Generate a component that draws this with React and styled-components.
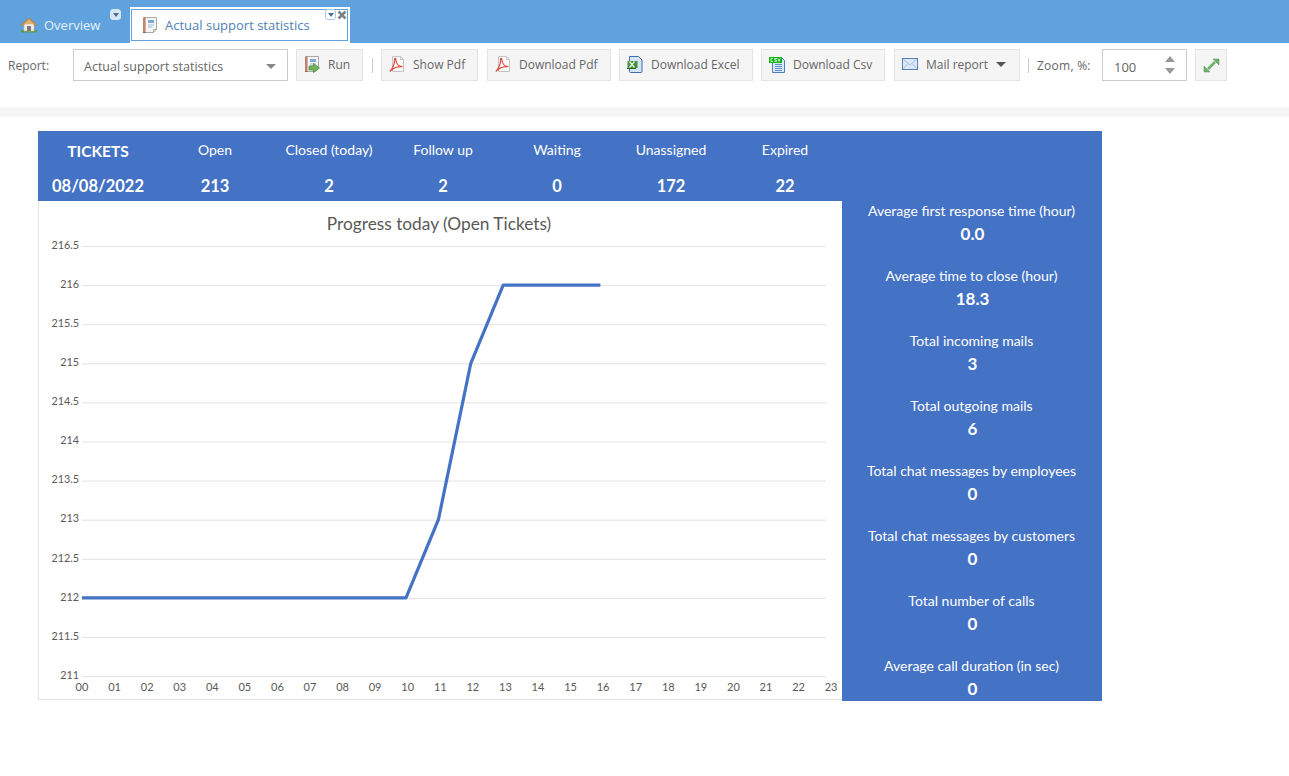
import React from "react";
import styled, { createGlobalStyle } from "styled-components";

const Global = createGlobalStyle`
  html, body { margin: 0; padding: 0; background: #fff; }
  body { font-family: "Open Sans", "Liberation Sans", sans-serif; overflow: hidden; }
  * { box-sizing: border-box; }
`;

const Page = styled.div`
  width: 1289px;
  height: 776px;
  display: flex;
  flex-direction: column;
`;

const TabBar = styled.div`
  height: 43px;
  background: #5fa2dd;
  display: flex;
  align-items: flex-end;
  padding-left: 9px;
`;

const Tab = styled.div`
  position: relative;
  width: 112px;
  height: 36px;
  margin-right: 9px;
  padding: 0 0 1px 11px;
  display: flex;
  align-items: center;
  gap: 6px;
  font-size: 13px;
  color: #e6f1fb;
`;

const ActiveTab = styled.div`
  position: relative;
  width: 220px;
  height: 36px;
  background: #fff;
  padding: 2px 2px 2px 1px;
`;

const ActiveInner = styled.div`
  height: 32px;
  border: 1px solid #5fa2dd;
  display: flex;
  align-items: center;
  gap: 7px;
  padding-left: 10px;
  font-size: 13px;
  color: #4f81b5;
`;

const TabMenu = styled.span`
  position: absolute;
  top: ${(p) => p.$top}px;
  right: ${(p) => p.$right}px;
  width: 11px;
  height: 11px;
  border-radius: 3px;
  background: ${(p) => (p.$light ? "#fff" : "#d5e6f6")};
  border: 1px solid ${(p) => (p.$light ? "#a9c9ea" : "#d5e6f6")};
  display: flex;
  align-items: center;
  justify-content: center;
  &::after {
    content: "";
    border-left: 3px solid transparent;
    border-right: 3px solid transparent;
    border-top: 4px solid #4c6f96;
  }
`;

const TabClose = styled.svg`
  position: absolute;
  top: 3px;
  right: 3px;
  width: 10px;
  height: 10px;
`;

const Toolbar = styled.div`
  height: 64px;
  padding: 6px 0 0 8px;
  display: flex;
  align-items: flex-start;
`;

const Label = styled.span`
  height: 32px;
  display: flex;
  align-items: center;
  font-size: 12px;
  letter-spacing: ${(p) => p.$ls || 0}px;
  color: #666;
  width: ${(p) => p.$w}px;
  flex: none;
`;

const SelectBox = styled.div`
  width: 215px;
  height: 32px;
  border: 1px solid #ccc;
  background: #fff;
  display: flex;
  align-items: center;
  justify-content: space-between;
  padding: 3px 11px 0 10px;
  font-size: 12.5px;
  color: #666;
  margin-right: 8px;
`;

const Caret = styled.span`
  width: 0;
  height: 0;
  border-left: 5.5px solid transparent;
  border-right: 5.5px solid transparent;
  border-top: 5px solid ${(p) => p.$color || "#888"};
  flex: none;
`;

const Button = styled.div`
  height: 32px;
  flex: none;
  width: ${(p) => p.$w}px;
  margin-right: ${(p) => p.$mr ?? 8}px;
  border: 1px solid #e3e3e3;
  background: #f5f5f5;
  display: flex;
  align-items: center;
  gap: 8px;
  padding: 0 0 2px 7px;
  font-size: 12px;
  color: #666;
  white-space: nowrap;
`;

const IconButton = styled(Button)`
  padding: 0 0 0 7px;
`;

const Separator = styled.span`
  width: 1px;
  height: 15px;
  margin: 9px 8px 0 ${(p) => p.$left ?? 1}px;
  background: #ccc;
  flex: none;
`;

const ZoomBox = styled.div`
  width: 85px;
  height: 32px;
  margin-right: 8px;
  flex: none;
  border: 1px solid #ccc;
  display: flex;
  align-items: center;
  justify-content: space-between;
  padding: 0 11px 0 11px;
  font-size: 13px;
  color: #666;
`;

const ZoomValue = styled.span`
  padding-top: 3px;
`;

const Spinner = styled.span`
  display: flex;
  flex-direction: column;
  gap: 6px;
`;

const SpinUp = styled.span`
  border-left: 5.5px solid transparent;
  border-right: 5.5px solid transparent;
  border-bottom: 6px solid #999;
`;

const SpinDown = styled.span`
  border-left: 5.5px solid transparent;
  border-right: 5.5px solid transparent;
  border-top: 6px solid #999;
`;

const Band = styled.div`
  height: 10px;
  background: #f5f5f5;
`;

const Report = styled.div`
  margin: 14px 0 0 38px;
  width: 1064px;
  height: 570px;
  display: grid;
  grid-template-columns: 804px 260px;
  grid-template-rows: 70px 500px;
  background: #4472c4;
  font-family: Lato, "Open Sans", sans-serif;
  color: #fff;
`;

const Header = styled.div`
  grid-column: 1 / 3;
  display: grid;
  grid-template-columns: 120px repeat(6, 114px);
  grid-template-rows: 40px 30px;
  text-align: center;
`;

const HeadLabel = styled.div`
  font-size: 14px;
  padding-top: 10px;
`;

const HeadTitle = styled.div`
  font-size: 15.5px;
  font-weight: 700;
  padding-top: 11px;
`;

const HeadValue = styled.div`
  font-size: 16.5px;
  font-weight: 700;
  padding-top: 5px;
`;

const ChartPanel = styled.div`
  background: #fff;
  height: 500px;
`;

const ChartFrame = styled.div`
  height: 499px;
  border-left: 1px solid #e4e4e4;
  border-bottom: 1px solid #e4e4e4;
`;

const ChartSvg = styled.svg`
  display: block;
  font-family: Lato, "Open Sans", sans-serif;
`;

const Side = styled.div`
  display: flex;
  flex-direction: column;
  text-align: center;
  overflow: hidden;
`;

const Stat = styled.div`
  height: 65px;
  padding: 0 1px 0 0;
  flex: none;
`;

const StatLabel = styled.div`
  font-size: 14px;
  line-height: 20px;
`;

const StatValue = styled.div`
  font-size: 17px;
  font-weight: 700;
  line-height: 25px;
  padding-left: 2px;
`;

const HomeIcon = () => (
  <svg width="18" height="16" viewBox="0 0 18 16">
    <rect x="1" y="13" width="16" height="2.5" rx="1" fill="#5b9a45" />
    <path d="M4 7h10v7H4z" fill="#f4efe6" stroke="#c9b79a" strokeWidth=".6" />
    <path d="M7 9h4v5H7z" fill="#77797c" />
    <path d="M0.800 8 9 1l8.200 7-1.200 1L9 3.600 2 9z" fill="#cf9650" stroke="#a8702e" strokeWidth=".5" />
    <path d="M9 2.500 14 7H4z" fill="#e2b06f" />
  </svg>
);

const NotebookIcon = ({ arrow }) => (
  <svg width="16" height="17" viewBox="0 0 16 17">
    <path d="M2.500.5h12v12l-3 3h-9z" fill="#f4f4f2" stroke="#a9a9a9" />
    <rect x="1" y="0.500" width="2.500" height="15.500" fill="#a9573a" />
    <path d="M1 2h3M1 4h3M1 6h3M1 8h3M1 10h3M1 12h3M1 14h3" stroke="#e9d6c6" strokeWidth=".7" />
    <rect x="6" y="3" width="6" height="3" fill="#7ea7dc" />
    <path d="M6 8h6M6 10h4" stroke="#9fb9dc" />
    {arrow ? (
      <path d="M5 10h4.500V7.500l6 4.500-6 4.500V14H5z" fill="#74b35a" stroke="#3f8a3a" strokeWidth=".7" />
    ) : (
      <path d="M11.500 15.500v-3h3" fill="none" stroke="#a9a9a9" />
    )}
  </svg>
);

const PdfIcon = () => (
  <svg width="16" height="17" viewBox="0 0 16 17">
    <path d="M3.500.5h8l3 3v12h-11z" fill="#fdfdfd" stroke="#c4c4c4" />
    <path d="M11.500.5v3h3" fill="none" stroke="#c4c4c4" />
    <path
      d="M0.800 15.500C3 13.500 6 8 5.600 3.200c-.1-1.200 1.300-1.200 1.300.2 0 3.600 2.400 6.800 6.600 7.200-4.300-.2-8.600 1-11 3.600"
      fill="none"
      stroke="#e24f45"
      strokeWidth="1.300"
    />
  </svg>
);

const ExcelIcon = () => (
  <svg width="16" height="17" viewBox="0 0 16 17">
    <path d="M2.500.5h9l3.500 3.500v11.500a1 1 0 0 1-1 1h-10.500a1 1 0 0 1-1-1z" fill="#d5e4f5" stroke="#3b6fb0" />
    <rect x="0.500" y="5" width="10" height="7" fill="#3f8f3a" />
    <path d="M2.500 5.500l5 6M7.500 5.500l-5 6" stroke="#e6f3df" strokeWidth="1.400" />
    <path d="M0 12.500h9" stroke="#1f6d22" />
  </svg>
);

const CsvIcon = () => (
  <svg width="16" height="17" viewBox="0 0 16 17">
    <path d="M3.500 1.500h9l3 3v12h-12z" fill="#dce8f7" stroke="#4a7fc0" />
    <path d="M6 8.500h7M6 10.500h7M6 12.500h7M6 14.500h7" stroke="#5c8fcc" />
    <rect x="0" y="1" width="13" height="6" fill="#0eb50e" />
    <path d="M4 2.500H2v3h2M8 2.500H5.800v1.500h1.700v1.500H5.500M9 2.500l1 3 1-3" fill="none" stroke="#fff" strokeWidth=".8" />
  </svg>
);

const MailIcon = () => (
  <svg width="16" height="12" viewBox="0 0 16 12">
    <rect x="0.500" y="0.500" width="15" height="11" fill="#dce8f8" stroke="#5a82b8" />
    <path d="M1 1l7 6 7-6M1 11l5-5.500M15 11l-5-5.500" fill="none" stroke="#a5c0e4" />
  </svg>
);

const ExpandIcon = () => (
  <svg width="17" height="17" viewBox="0 0 17 17">
    <path d="M5 12l7-7" stroke="#6cb26a" strokeWidth="2.600" />
    <path d="M10 2h6v6zM7 15H1V9z" fill="#6cb26a" stroke="#4f9a50" strokeWidth=".5" />
  </svg>
);

const yTicks = ["216.5", "216", "215.5", "215", "214.5", "214", "213.5", "213", "212.5", "212", "211.5", "211"];
const hours = Array.from({ length: 24 }, (_, i) => String(i).padStart(2, "0"));
const points = [212, 212, 212, 212, 212, 212, 212, 212, 212, 212, 212, 213, 215, 216, 216, 216, 216];

const Chart = () => {
  const ox = 43;
  const y = (v) => 45 + (216.5 - v) * 78.2;
  const x = (i) => ox + i * 32.4;
  return (
    <ChartSvg width="803" height="498" viewBox="0 0 803 498">
      <text x="400" y="29" textAnchor="middle" fontSize="17.300" fill="#595959">
        Progress today (Open Tickets)
      </text>
      {yTicks.map((t, i) => (
        <g key={t}>
          <line x1={ox} x2="787" y1={45.500 + i * 39.100} y2={45.500 + i * 39.100} stroke="#e2e2e2" />
          <text x="40" y={47.700 + i * 39.100} textAnchor="end" fontSize="10.800" fill="#595959">
            {t}
          </text>
        </g>
      ))}
      {hours.map((h, i) => (
        <text key={h} x={43 + i * 32.570} y="490" textAnchor="middle" fontSize="11" fill="#595959">
          {h}
        </text>
      ))}
      <polyline
        points={points.map((v, i) => `${x(i)},${y(v)}`).join(" ")}
        fill="none"
        stroke="#4472c4"
        strokeWidth="3.200"
        strokeLinejoin="round"
      />
    </ChartSvg>
  );
};

const headers = [
  ["Open", "213"],
  ["Closed (today)", "2"],
  ["Follow up", "2"],
  ["Waiting", "0"],
  ["Unassigned", "172"],
  ["Expired", "22"],
];

const stats = [
  ["Average first response time (hour)", "0.0"],
  ["Average time to close (hour)", "18.3"],
  ["Total incoming mails", "3"],
  ["Total outgoing mails", "6"],
  ["Total chat messages by employees", "0"],
  ["Total chat messages by customers", "0"],
  ["Total number of calls", "0"],
  ["Average call duration (in sec)", "0"],
];

export default function App() {
  return (
    <Page>
      <Global />
      <TabBar>
        <Tab>
          <HomeIcon />
          Overview
          <TabMenu $top={2} $right={0} />
        </Tab>
        <ActiveTab>
          <ActiveInner>
            <NotebookIcon />
            Actual support statistics
          </ActiveInner>
          <TabMenu $top={2} $right={14} $light />
          <TabClose viewBox="0 0 10 10">
            <path d="M1.500 1.500l7 7M8.500 1.500l-7 7" stroke="#7d8287" strokeWidth="2.600" />
          </TabClose>
        </ActiveTab>
      </TabBar>
      <Toolbar>
        <Label $w={65}>Report:</Label>
        <SelectBox>
          Actual support statistics
          <Caret />
        </SelectBox>
        <Button $w={67} $mr={0}>
          <NotebookIcon arrow />
          Run
        </Button>
        <Separator $left={9} />
        <Button $w={97} $mr={9}>
          <PdfIcon />
          Show Pdf
        </Button>
        <Button $w={124}>
          <PdfIcon />
          Download Pdf
        </Button>
        <Button $w={134}>
          <ExcelIcon />
          Download Excel
        </Button>
        <Button $w={124} $mr={9}>
          <CsvIcon />
          Download Csv
        </Button>
        <Button $w={126} $mr={0}>
          <MailIcon />
          Mail report
          <Caret $color="#555" />
        </Button>
        <Separator $left={8} />
        <Label $w={65} $ls={0.25}>Zoom, %:</Label>
        <ZoomBox>
          <ZoomValue>100</ZoomValue>
          <Spinner>
            <SpinUp />
            <SpinDown />
          </Spinner>
        </ZoomBox>
        <IconButton $w={32} $mr={0}>
          <ExpandIcon />
        </IconButton>
      </Toolbar>
      <Band />
      <Report>
        <Header>
          <HeadTitle>TICKETS</HeadTitle>
          {headers.map(([l]) => (
            <HeadLabel key={l}>{l}</HeadLabel>
          ))}
          <HeadValue>08/08/2022</HeadValue>
          {headers.map(([l, v]) => (
            <HeadValue key={l}>{v}</HeadValue>
          ))}
        </Header>
        <ChartPanel>
          <ChartFrame>
            <Chart />
          </ChartFrame>
        </ChartPanel>
        <Side>
          {stats.map(([l, v]) => (
            <Stat key={l}>
              <StatLabel>{l}</StatLabel>
              <StatValue>{v}</StatValue>
            </Stat>
          ))}
        </Side>
      </Report>
    </Page>
  );
}
